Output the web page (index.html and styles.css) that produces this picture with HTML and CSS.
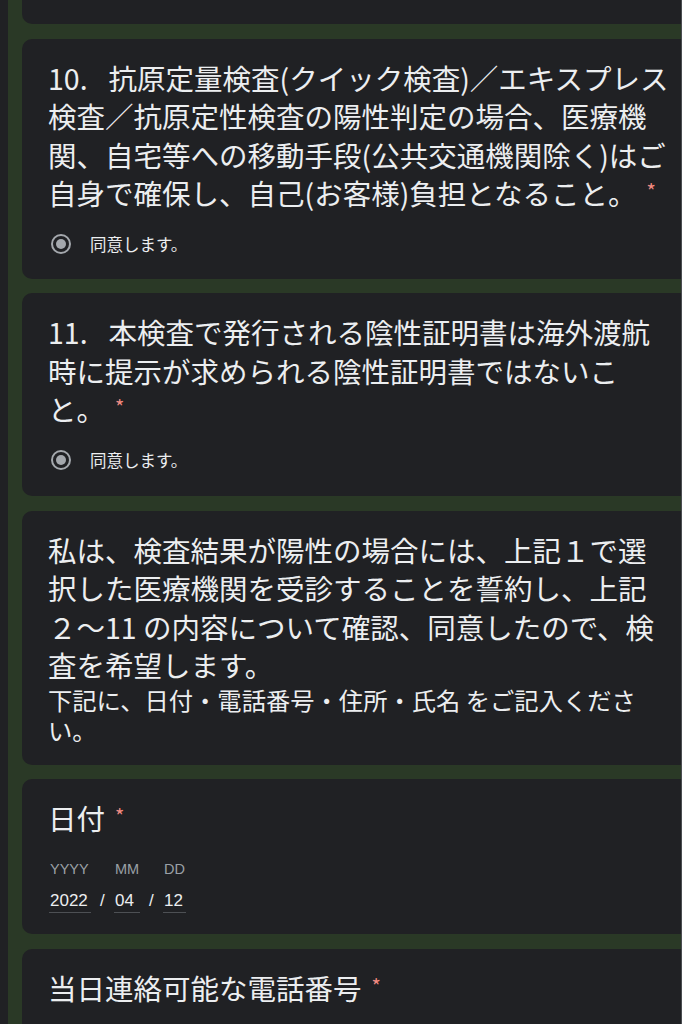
FILE: index.html
```html
<!DOCTYPE html>
<html lang="ja">

<head>
    <meta charset="UTF-8">
    <meta name="viewport" content="width=device-width, initial-scale=1.0">
    <title>同意書</title>
    <link rel="stylesheet" href="styles.css">
</head>

<body>
    <div class="page">
        <div class="card card-tail"></div>

        <div class="card">
            <p class="question"><span class="num">10.</span>抗原定量検査(クイック検査)／エキスプレス<br>検査／抗原定性検査の陽性判定の場合、医療機<br>関、自宅等への移動手段(公共交通機関除く)はご<br>自身で確保し、自己(お客様)負担となること。<span class="req">*</span></p>
            <label class="choice"><span class="radio"></span>同意します。</label>
        </div>

        <div class="card card-short">
            <p class="question"><span class="num">11.</span>本検査で発行される陰性証明書は海外渡航<br>時に提示が求められる陰性証明書ではないこ<br>と。<span class="req">*</span></p>
            <label class="choice"><span class="radio"></span>同意します。</label>
        </div>

        <div class="card card-statement">
            <p class="question">私は、検査結果が陽性の場合には、上記１で選<br>択した医療機関を受診することを誓約し、上記<br>２〜11 の内容について確認、同意したので、検<br>査を希望します。</p>
            <p class="note">下記に、日付・電話番号・住所・氏名 をご記入くださ<br>い。</p>
        </div>

        <div class="card card-date">
            <p class="question">日付<span class="req">*</span></p>
            <div class="date">
                <div class="date-part year">
                    <span class="date-label">YYYY</span>
                    <span class="date-value">2022</span>
                </div>
                <span class="date-sep">/</span>
                <div class="date-part month">
                    <span class="date-label">MM</span>
                    <span class="date-value">04</span>
                </div>
                <span class="date-sep">/</span>
                <div class="date-part day">
                    <span class="date-label">DD</span>
                    <span class="date-value">12</span>
                </div>
            </div>
        </div>

        <div class="card card-open">
            <p class="question">当日連絡可能な電話番号<span class="req">*</span></p>
        </div>
    </div>
</body>

</html>
```

FILE: styles.css
```css
body {
    margin: 0;
    background-color: #202124;
    color: #eceef0;
    font-family: "Noto Sans CJK JP", "Liberation Sans", sans-serif;
    overflow: hidden;
}

.page {
    display: flex;
    flex-direction: column;
    gap: 14.5px;
    height: 1024px;
    margin-left: 8px;
    padding-left: 14px;
    background-color: #2a3926;
    border-right: 1px solid #4a4d51;
    box-sizing: border-box;
    overflow: hidden;
}

.card {
    flex-shrink: 0;
    background-color: #202124;
    border-radius: 10px 0 0 10px;
    padding: 20px 0 23px 26px;
}

.card-tail {
    height: 24px;
    padding: 0;
    border-radius: 0 0 0 10px;
}

.card-short {
    padding-bottom: 24.5px;
}

.card-statement {
    padding-bottom: 20px;
}

.card-date {
    padding-bottom: 21.5px;
}

.card-open {
    height: 120px;
}

.question {
    margin: 0;
    font-size: 28.5px;
    line-height: 38.5px;
    white-space: nowrap;
}

.num {
    margin-right: 21px;
}

.req {
    color: #f28b82;
    font-size: 20px;
    line-height: 1;
    margin-left: 10px;
    vertical-align: 6px;
}

.choice {
    display: flex;
    align-items: center;
    gap: 19px;
    height: 24px;
    margin-top: 19px;
    padding-left: 3px;
    font-size: 16.5px;
}

.radio {
    display: flex;
    align-items: center;
    justify-content: center;
    width: 20px;
    height: 20px;
    border: 2px solid #a4a8ad;
    border-radius: 50%;
    box-sizing: border-box;
}

.radio::after {
    content: "";
    width: 10px;
    height: 10px;
    border-radius: 50%;
    background-color: #a4a8ad;
}

.note {
    margin: 0;
    font-size: 24.3px;
    line-height: 30px;
    white-space: nowrap;
}

.date {
    display: flex;
    gap: 9px;
    margin-top: 21px;
    padding-left: 1px;
    font-family: "Liberation Sans", sans-serif;
}

.date-part {
    display: flex;
    flex-direction: column;
    gap: 10px;
}

.year {
    width: 42px;
}

.month {
    width: 26px;
}

.day {
    width: 23px;
}

.date-label {
    padding-left: 1px;
    font-size: 14.5px;
    line-height: 20px;
    color: #9aa0a6;
}

.date-value {
    padding-left: 1px;
    font-size: 17px;
    line-height: 23px;
    border-bottom: 1px solid #4d5054;
}

.date-sep {
    align-self: flex-end;
    width: 5px;
    font-size: 17px;
    line-height: 24px;
}
```
